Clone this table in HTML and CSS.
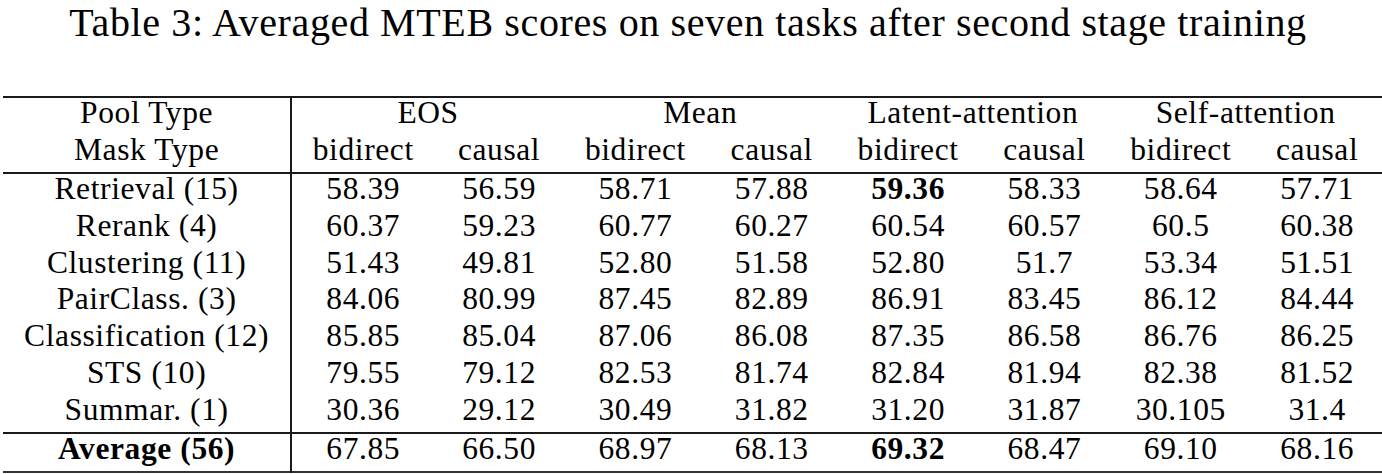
FILE: index.html
```html
<!DOCTYPE html>
<html>
<head>
<meta charset="utf-8">
<link rel="stylesheet" href="styles.css">
</head>
<body>
<h1 class="caption">Table 3: Averaged MTEB scores on seven tasks after second stage training</h1>
<table class="results">
  <colgroup>
    <col class="c-label">
    <col class="c-bi"><col class="c-ca">
    <col class="c-bi"><col class="c-ca">
    <col class="c-bi"><col class="c-ca">
    <col class="c-bi"><col class="c-ca">
  </colgroup>
  <thead>
    <tr class="head first">
      <th class="label">Pool Type</th>
      <th colspan="2">EOS</th>
      <th colspan="2">Mean</th>
      <th colspan="2">Latent-attention</th>
      <th colspan="2">Self-attention</th>
    </tr>
    <tr class="head last">
      <th class="label">Mask Type</th>
      <th>bidirect</th><th>causal</th>
      <th>bidirect</th><th>causal</th>
      <th>bidirect</th><th>causal</th>
      <th>bidirect</th><th>causal</th>
    </tr>
  </thead>
  <tbody>
    <tr><td class="label">Retrieval (15)</td><td>58.39</td><td>56.59</td><td>58.71</td><td>57.88</td><td class="best">59.36</td><td>58.33</td><td>58.64</td><td>57.71</td></tr>
    <tr><td class="label">Rerank (4)</td><td>60.37</td><td>59.23</td><td>60.77</td><td>60.27</td><td>60.54</td><td>60.57</td><td>60.5</td><td>60.38</td></tr>
    <tr><td class="label">Clustering (11)</td><td>51.43</td><td>49.81</td><td>52.80</td><td>51.58</td><td>52.80</td><td>51.7</td><td>53.34</td><td>51.51</td></tr>
    <tr><td class="label">PairClass. (3)</td><td>84.06</td><td>80.99</td><td>87.45</td><td>82.89</td><td>86.91</td><td>83.45</td><td>86.12</td><td>84.44</td></tr>
    <tr><td class="label">Classification (12)</td><td>85.85</td><td>85.04</td><td>87.06</td><td>86.08</td><td>87.35</td><td>86.58</td><td>86.76</td><td>86.25</td></tr>
    <tr><td class="label">STS (10)</td><td>79.55</td><td>79.12</td><td>82.53</td><td>81.74</td><td>82.84</td><td>81.94</td><td>82.38</td><td>81.52</td></tr>
    <tr class="pre-avg"><td class="label">Summar. (1)</td><td>30.36</td><td>29.12</td><td>30.49</td><td>31.82</td><td>31.20</td><td>31.87</td><td>30.105</td><td>31.4</td></tr>
  </tbody>
  <tfoot>
    <tr class="avg"><td class="label best">Average (56)</td><td>67.85</td><td>66.50</td><td>68.97</td><td>68.13</td><td class="best">69.32</td><td>68.47</td><td>69.10</td><td>68.16</td></tr>
  </tfoot>
</table>
</body>
</html>
```

FILE: styles.css
```css
html, body {
  margin: 0;
  padding: 0;
  background: #ffffff;
  color: #000000;
  font-family: "Liberation Serif", "Times New Roman", serif;
}

.caption {
  margin: 0;
  font-size: 40px;
  font-weight: normal;
  letter-spacing: 0.62px;
  line-height: 45px;
  text-align: center;
  padding-right: 6px;
}

.results {
  margin: 51px 0 0 3px;
  border-collapse: collapse;
  table-layout: fixed;
  width: 1379px;
  font-size: 31.5px;
  letter-spacing: 0.6px;
}

.c-label { width: 288px; }
.c-bi { width: 143px; }
.c-ca { width: 129.5px; }

.results th,
.results td {
  font-weight: normal;
  text-align: center;
  white-space: nowrap;
  padding: 0 0 8px 0;
  line-height: 29px;
}

.results .label {
  border-right: 2px solid #1a1a1a;
}

.results .best {
  font-weight: bold;
}

.head.first {
  border-top: 2px solid #1a1a1a;
}

.head.last {
  border-bottom: 2px solid #1a1a1a;
}

.results tbody td {
  padding-bottom: 7.8px;
}

.avg {
  border-top: 2px solid #1a1a1a;
  border-bottom: 2px solid #333333;
}
```
